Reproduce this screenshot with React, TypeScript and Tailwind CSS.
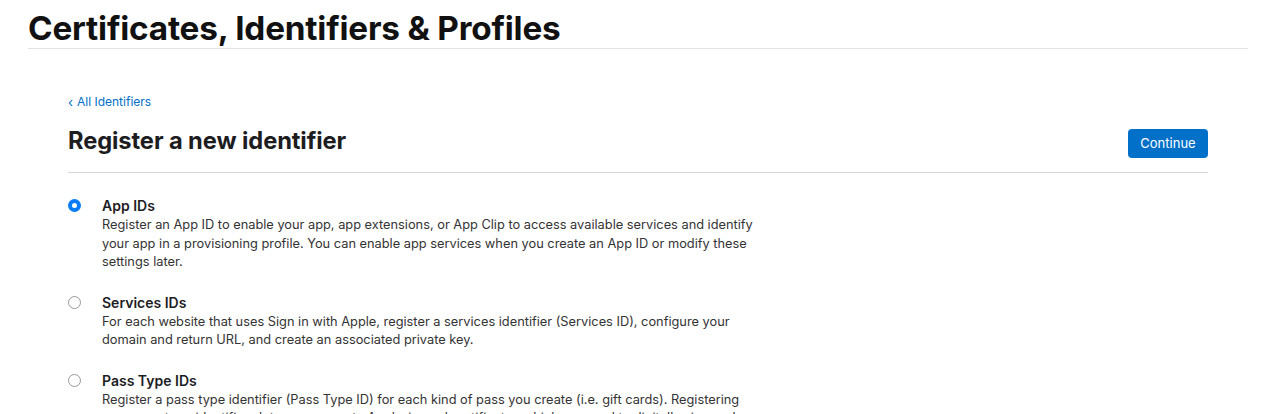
import React, { useState } from 'react';

const options = [
  {
    id: 'app',
    title: 'App IDs',
    desc: 'Register an App ID to enable your app, app extensions, or App Clip to access available services and identify your app in a provisioning profile. You can enable app services when you create an App ID or modify these settings later.',
  },
  {
    id: 'services',
    title: 'Services IDs',
    desc: 'For each website that uses Sign in with Apple, register a services identifier (Services ID), configure your domain and return URL, and create an associated private key.',
  },
  {
    id: 'pass',
    title: 'Pass Type IDs',
    desc: 'Register a pass type identifier (Pass Type ID) for each kind of pass you create (i.e. gift cards). Registering your pass type identifiers lets you generate Apple-issued certificates which are used to digitally sign and send updates to your passes.',
  },
];

export default function App() {
  const [selected, setSelected] = useState('app');

  return (
    <div className="h-[414px] bg-white text-[#1d1d1f] font-['Inter',sans-serif] overflow-hidden">
      <div className="ml-[28px] mr-[36px] pt-[9px]">
        {/* Page header */}
        <h1 className="text-[33.3px] leading-[39px] font-bold tracking-[-0.2px] text-[#111] border-b border-[#e3e3e6]">
          Certificates, Identifiers &amp; Profiles
        </h1>

        <div className="px-[40px] pt-[45px]">
          <a href="#" className="text-[12px] leading-[16px] text-[#0070c9] flex items-center gap-[4px]">
            <span className="text-[13px] -mt-[1px]">‹</span>All Identifiers
          </a>

          <div className="flex items-center justify-between pt-[14px] pb-[14px] border-b border-[#d6d6d6]">
            <h2 className="text-[23.7px] leading-[28px] font-bold text-[#1d1d1f] tracking-[-0.1px]">
              Register a new identifier
            </h2>
            <button className="mt-[5px] h-[29px] w-[80px] rounded-[4px] bg-[#0070c9] text-white text-[13px]">
              Continue
            </button>
          </div>

          {/* Options */}
          <div className="pt-[24px] flex flex-col gap-[22px]">
            {options.map((o) => {
              const isActive = selected === o.id;
              return (
                <label key={o.id} className="flex items-start cursor-pointer" onClick={() => setSelected(o.id)}>
                  <span className="w-[34px] shrink-0 pt-[2px]">
                    {isActive ? (
                      <span className="block w-[13px] h-[13px] rounded-full bg-[#0a7cf5] flex items-center justify-center">
                        <span className="block w-[5px] h-[5px] rounded-full bg-white" />
                      </span>
                    ) : (
                      <span className="block w-[13px] h-[13px] rounded-full border border-[#999] bg-white" />
                    )}
                  </span>
                  <span className="block max-w-[665px]">
                    <span className="block text-[14px] leading-[17px] font-semibold text-[#1d1d1f]">{o.title}</span>
                    <span className="block text-[12.8px] leading-[18.5px] text-[#333] mt-[2px]">{o.desc}</span>
                  </span>
                </label>
              );
            })}
          </div>
        </div>
      </div>
    </div>
  );
}
